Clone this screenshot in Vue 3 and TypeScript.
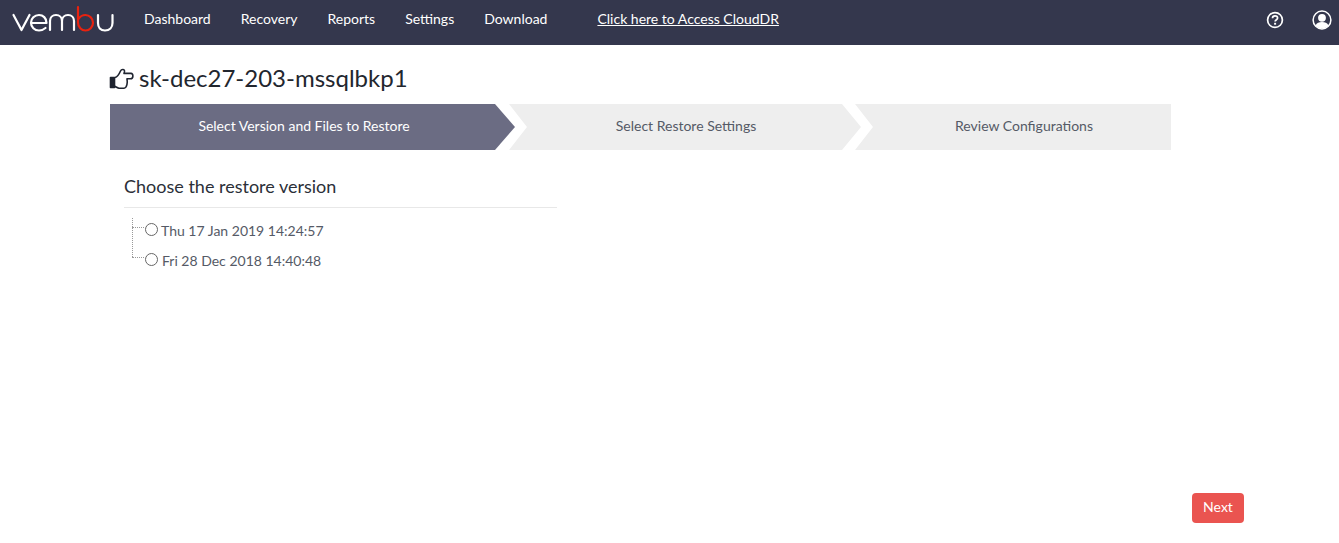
<script setup lang="ts">
const navItems: string[] = ['Dashboard', 'Recovery', 'Reports', 'Settings', 'Download']
const versions: string[] = ['Thu 17 Jan 2019 14:24:57', 'Fri 28 Dec 2018 14:40:48']
</script>

<template>
  <div class="page">
    <header class="topbar">
      <svg class="logo" width="102" height="30" viewBox="0 0 102 30" fill="none" stroke-width="2.2" stroke-linecap="round" stroke-linejoin="round">
        <path d="M1.5 10 L9.5 25 L17.5 10" stroke="#fff" />
        <path d="M19.5 18 H34.5 C34.5 13 31 10 27 10 C22.5 10 19 13.5 19 17.7 C19 22 22.5 25.5 27 25.5 C29.5 25.5 31.5 24.7 33.5 23" stroke="#fff" />
        <path d="M38 25 V16 C38 12.5 40.5 10 44 10 C47.5 10 50 12.5 50 16 V25 M50 16 C50 12.5 52.5 10 56 10 C59.5 10 62 12.5 62 16 V25" stroke="#fff" />
        <path d="M66 2 V17.5 C66 22 69.5 25.5 73.5 25.5 C77.5 25.5 81 22 81 17.8 C81 13.5 77.5 10 73.5 10 C71 10 68 11.5 66.5 14" stroke="#e8220f" />
        <path d="M86 10 V18 C86 22.5 88.5 25.5 93 25.5 C97.5 25.5 100.5 22.5 100.5 18 V10" stroke="#fff" />
      </svg>
      <nav class="nav">
        <a v-for="item in navItems" :key="item" class="nav-link">{{ item }}</a>
      </nav>
      <a class="cloud-link">Click here to Access CloudDR</a>
      <div class="top-icons">
        <svg width="18" height="18" viewBox="0 0 18 18" fill="none">
          <circle cx="9" cy="9" r="7.4" stroke="#fff" stroke-width="1.7" />
          <path d="M6.5 7.2 C6.5 5.7 7.6 4.8 9 4.8 C10.5 4.8 11.6 5.7 11.6 7 C11.6 8.7 9.1 8.7 9.1 10.6" stroke="#fff" stroke-width="1.7" />
          <rect x="8.1" y="11.8" width="2" height="1.9" fill="#fff" />
        </svg>
        <svg width="20" height="20" viewBox="0 0 20 20" fill="none">
          <circle cx="10" cy="10" r="8.9" stroke="#fff" stroke-width="1.5" />
          <circle cx="10" cy="7.8" r="3.9" fill="#fff" />
          <path d="M3.6 15.6 C4.6 12.8 7 12 10 12 C13 12 15.4 12.8 16.4 15.6 C14.8 17.6 12.5 18.6 10 18.6 C7.5 18.6 5.2 17.6 3.6 15.6 Z" fill="#fff" />
        </svg>
      </div>
    </header>

    <main class="content">
      <h1 class="title">
        <svg class="hand" width="25" height="22" viewBox="0 0 25 22" fill="none" stroke="#1f2430" stroke-width="1.6" stroke-linejoin="round">
          <rect x="1.5" y="9.5" width="4" height="10" fill="#1f2430" />
          <path d="M6 9.5 C8 9 10 6.5 11.5 3 C12.5 0.8 15.8 1 15.5 3.4 L15 5.4 H22 C24.6 5.4 24.6 10.8 21.5 10.8 H18 C18.6 14 18.2 20.2 15 20.2 H10 C8.5 20.2 7.2 18.8 5.5 18.4" />
        </svg>
        <span class="title-text">sk-dec27-203-mssqlbkp1</span>
      </h1>

      <div class="steps">
        <div class="step step-first">Select Version and Files to Restore</div>
        <div class="step step-middle">Select Restore Settings</div>
        <div class="step step-last">Review Configurations</div>
      </div>

      <section class="versions">
        <h2 class="versions-title">Choose the restore version</h2>
        <ul class="tree">
          <li v-for="version in versions" :key="version" class="tree-item">
            <span class="radio"></span>
            <span class="version-label">{{ version }}</span>
          </li>
        </ul>
      </section>
    </main>

    <div class="footer">
      <button class="next" type="button">Next</button>
    </div>
  </div>
</template>

<style>
html, body {
  margin: 0;
  background: #fff;
}
</style>

<style scoped>
.page {
  width: 1339px;
  height: 543px;
  display: flex;
  flex-direction: column;
  font-family: Lato, "Open Sans", sans-serif;
  overflow: hidden;
}
.topbar {
  height: 45px;
  background: #34374d;
  display: flex;
  align-items: center;
  padding: 0 7px 8px 12px;
  box-sizing: border-box;
  flex: none;
}
.logo {
  flex: none;
  margin-top: 3px;
}
.nav {
  display: flex;
  gap: 30px;
  margin-left: 30px;
}
.nav-link {
  color: #fff;
  font-size: 14px;
}
.cloud-link {
  color: #fff;
  font-size: 14px;
  text-decoration: underline;
  margin-left: 50px;
}
.top-icons {
  margin-left: auto;
  margin-top: 3px;
  display: flex;
  align-items: center;
  gap: 28px;
}
.content {
  flex: 1;
  padding: 0 0 0 109px;
}
.title {
  margin: 13px 0 7px;
  height: 39px;
  display: flex;
  align-items: center;
  gap: 5px;
  font-size: 24px;
  font-weight: 400;
  color: #22262e;
}
.hand {
  flex: none;
  margin-top: 2px;
}
.steps {
  display: flex;
  width: 1061px;
  height: 46px;
  margin-left: 1px;
}
.step {
  display: flex;
  align-items: center;
  justify-content: center;
  font-size: 14px;
  height: 46px;
  padding-bottom: 4px;
  box-sizing: border-box;
  background: #eee;
  color: #555a66;
}
.step-first {
  width: 405px;
  padding-right: 17px;
  background: #6b6c83;
  color: #fff;
  clip-path: polygon(0 0, 385px 0, 100% 50%, 385px 100%, 0 100%);
}
.step-middle {
  width: 352px;
  margin-left: -6px;
  padding-left: 2px;
  clip-path: polygon(0 0, 333px 0, 100% 50%, 333px 100%, 0 100%, 18px 50%);
}
.step-last {
  width: 316px;
  margin-left: -6px;
  padding-left: 22px;
  clip-path: polygon(0 0, 100% 0, 100% 100%, 0 100%, 18px 50%);
}
.versions {
  width: 433px;
  margin-left: 15px;
}
.versions-title {
  margin: 0;
  padding: 25px 0 10px;
  font-size: 18px;
  font-weight: 400;
  color: #2b2f38;
  line-height: 22px;
  border-bottom: 1px solid #e8e8e8;
}
.tree {
  list-style: none;
  margin: 7px 0 0;
  padding: 0 0 0 7px;
  position: relative;
}
.tree::before {
  content: "";
  position: absolute;
  left: 8px;
  top: 3px;
  height: 39px;
  border-left: 1px dotted #999;
}
.tree-item {
  display: flex;
  align-items: center;
  height: 30px;
  padding-left: 14px;
  position: relative;
  font-size: 14px;
  color: #555a66;
}
.tree-item::before {
  content: "";
  position: absolute;
  left: 1px;
  top: 12px;
  width: 12px;
  border-top: 1px dotted #999;
}
.radio {
  width: 11px;
  height: 11px;
  border: 1px solid #666;
  border-radius: 50%;
  background: #fff;
  margin-right: 4px;
  margin-top: -2px;
  flex: none;
}
.tree-item:first-child .radio {
  margin-right: 3px;
}
.footer {
  display: flex;
  justify-content: flex-end;
  padding: 0 95px 20px 0;
  flex: none;
}
.next {
  width: 52px;
  height: 30px;
  border: 0;
  border-radius: 4px;
  background: #ea5450;
  color: #fff;
  font-family: inherit;
  font-size: 14px;
  padding: 0 0 4px;
}
</style>
